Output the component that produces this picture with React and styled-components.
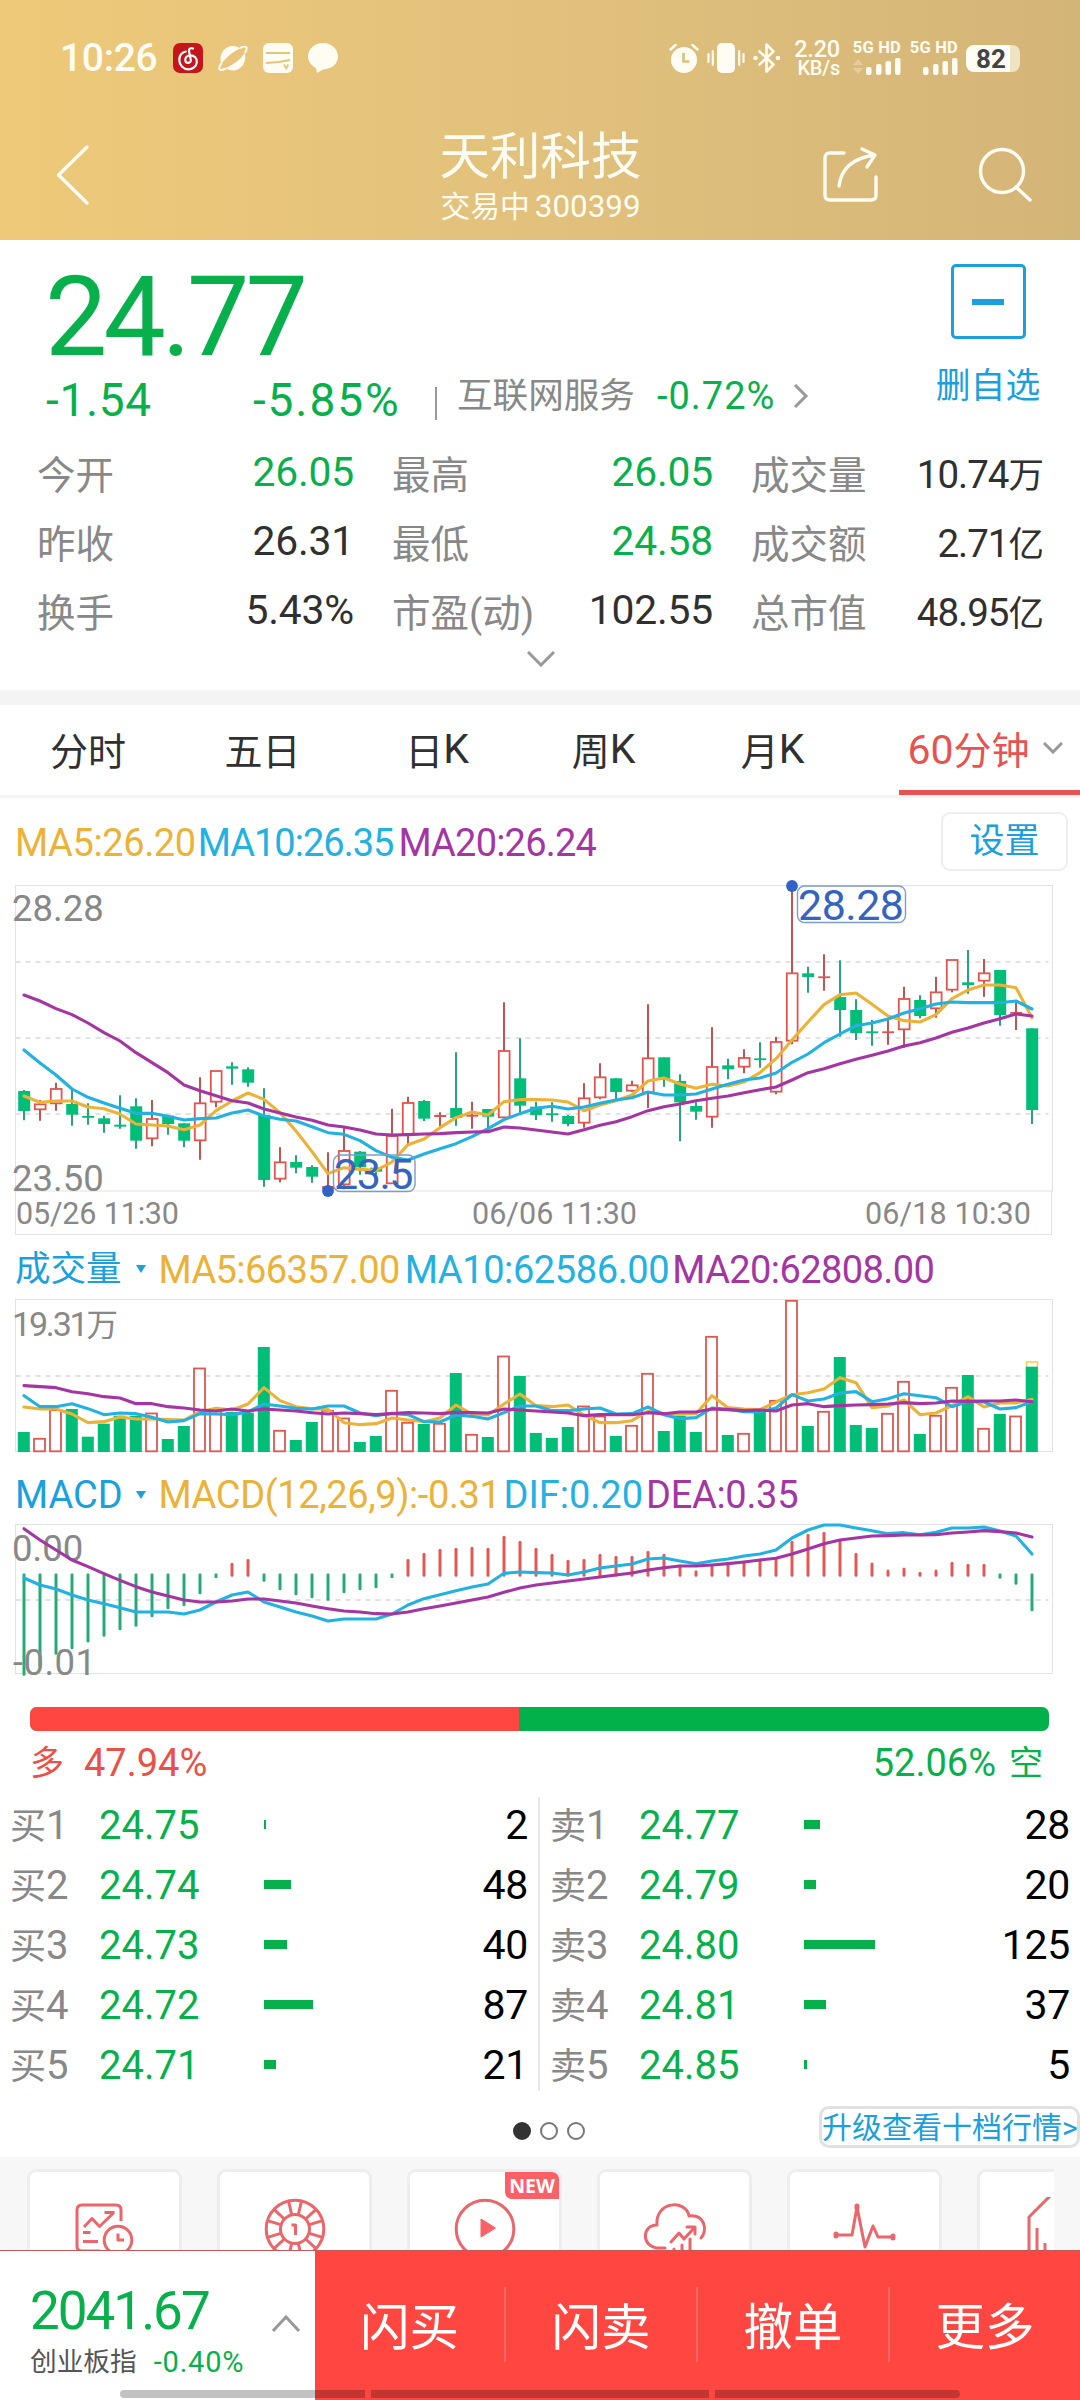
import React from 'react'
import styled, { createGlobalStyle } from 'styled-components'

const c = {
  green: '#07b04b',
  candleGreen: '#00bd78',
  wickGreen: '#2aa27a',
  red: '#ff4640',
  tabRed: '#e65350',
  candleRed: '#e0564f',
  wickRed: '#bd5652',
  blue: '#1b9fdd',
  marker: '#3564bd',
  yellow: '#ecb237',
  cyan: '#22b1e0',
  purple: '#a336a3',
  grey: '#888',
  text: '#303030',
  line: '#e2e2e2',
  pink: '#ea666a',
}

const GlobalStyle = createGlobalStyle`
  body {
    margin: 0;
    background: #fff;
  }
  * {
    box-sizing: border-box;
  }
`

const Page = styled.div`
  display: flex;
  flex-direction: column;
  width: 1080px;
  height: 2400px;
  overflow: hidden;
  color: ${c.text};
  background: #fff;
  font-family: Roboto, 'Noto Sans CJK SC', sans-serif;
  white-space: nowrap;
`

/* ---------- header ---------- */

const Header = styled.header`
  display: flex;
  flex-direction: column;
  flex: none;
  height: 240px;
  color: #fffdf3;
  background: linear-gradient(90deg, #eec979 0%, #e1c17c 50%, #d4b578 100%);
`

const StatusBar = styled.div`
  display: flex;
  align-items: center;
  justify-content: space-between;
  height: 116px;
  padding: 0 60px 0 60px;
`

const StatusGroup = styled.div`
  display: flex;
  align-items: center;
`

const Clock = styled.span`
  width: 113px;
  font-size: 39px;
  font-weight: 500;
  line-height: 44px;
  letter-spacing: -0.3px;
`

const StatusIcon = styled.svg`
  flex: none;
  width: ${p => p.$w || 30}px;
  height: 30px;
  margin-right: ${p => p.$gap || 15}px;
`

const Speed = styled.div`
  width: 47px;
  margin-right: 12px;
  font-size: 23.5px;
  font-weight: 500;
  line-height: 20px;
  text-align: right;
  letter-spacing: -0.2px;

  small {
    display: block;
    font-size: 20px;
    line-height: 19px;
  }
`

const Signal = styled.div`
  display: flex;
  flex-direction: column;
  align-items: flex-end;
  width: 49px;
  margin-right: 8px;
  font-size: 16.5px;
  font-weight: 700;
  line-height: 16px;
  letter-spacing: 0.2px;

  svg {
    width: 48px;
    height: 18px;
    margin-top: 2px;
  }
`

const Battery = styled.div`
  width: 54px;
  height: 27px;
  padding-right: 4px;
  border-radius: 8px;
  color: #444;
  background: linear-gradient(90deg, #fffdf3 0 44px, #efe3c6 44px);
  font-size: 26px;
  font-weight: 700;
  line-height: 28px;
  text-align: center;
`

const NavBar = styled.div`
  display: grid;
  grid-template-columns: 200px 1fr 200px 56px;
  height: 124px;
`

const NavTitle = styled.div`
  display: flex;
  flex-direction: column;
  align-items: center;
  padding-left: 57px;
`

const StockName = styled.h1`
  margin: 10px 0 0;
  font-size: 50.5px;
  font-weight: 400;
  line-height: 61px;
`

const StockCode = styled.div`
  font-size: 31.4px;
  line-height: 40px;

  span {
    margin-right: 5px;
    font-size: 29.8px;
  }
`

const NavIcon = styled.svg`
  width: 60px;
  height: 64px;
  margin: 26px 0 0 ${p => p.$left}px;
  fill: none;
  stroke: #fffdf3;
  stroke-width: 3.4;
  stroke-linecap: round;
  stroke-linejoin: round;
`

/* ---------- quote ---------- */

const Quote = styled.section`
  flex: none;
  height: 450px;
  padding: 16px 36px 0 37px;
`

const QuoteTop = styled.div`
  display: flex;
  justify-content: space-between;
  height: 180px;
`

const Price = styled.div`
  margin-left: 8px;
  color: ${c.green};
  font-size: 111px;
  line-height: 122px;
  letter-spacing: -4px;
`

const ChangeRow = styled.div`
  display: flex;
  align-items: center;
  height: 44px;
  padding-left: 9px;
  color: ${c.grey};
`

const Change = styled.span`
  width: ${p => p.$w}px;
  color: ${c.green};
  font-size: ${p => p.$size || 46}px;
  letter-spacing: ${p => p.$ls || 0}px;
  line-height: 44px;
`

const SectorLink = styled.div`
  display: flex;
  align-items: center;
  margin: 0 0 8px 20px;
  font-size: 35.6px;
  line-height: 44px;

  span:first-child {
    margin-right: 22px;
  }
`

const Divider = styled.i`
  width: 2px;
  height: 33px;
  margin-top: 7px;
  background: #999;
`

const Watch = styled.div`
  display: flex;
  flex-direction: column;
  align-items: center;
  width: 106px;
  margin-right: 3px;
  padding-top: 8px;
  color: ${c.blue};
  font-size: 34.8px;
  line-height: 40px;
`

const WatchBox = styled.div`
  display: flex;
  align-items: center;
  justify-content: center;
  width: 75px;
  height: 75px;
  margin-bottom: 27px;
  border: 3px solid ${c.blue};
  border-radius: 5px;

  &::after {
    content: '';
    width: 32px;
    height: 6px;
    background: ${c.blue};
  }
`

const Stats = styled.div`
  display: grid;
  grid-template-columns: 317px 321px 292px;
  column-gap: 38px;
  grid-auto-rows: 69px;
  padding-top: 1px;
`

const Stat = styled.div`
  display: flex;
  align-items: center;
  justify-content: space-between;
  color: ${c.grey};
  font-size: 38.5px;
`

const StatValue = styled.span`
  padding-top: 1px;
  color: ${p => (p.$down ? c.green : c.text)};
  font-size: ${p => (p.$unit ? 38.5 : 40.8)}px;
  letter-spacing: ${p => (p.$unit ? '-1px' : '-0.2px')};

  small {
    font-size: 35.5px;
  }
`

const Chevron = styled.svg`
  display: block;
  flex: none;
  width: ${p => p.$w}px;
  height: ${p => p.$h}px;
  margin-top: ${p => p.$top || 0}px;
  fill: none;
  stroke: ${p => p.$color || '#999'};
  stroke-width: 3;
`

const Expand = styled.div`
  display: flex;
  justify-content: center;
  padding-top: 7px;
`

const Strip = styled.div`
  flex: none;
  height: 15px;
  background: #f4f4f4;
`

/* ---------- tabs ---------- */

const Tabs = styled.nav`
  display: flex;
  flex: none;
  height: 93px;
  border-bottom: 3px solid #f4f4f4;
`

const Tab = styled.div`
  display: flex;
  align-items: center;
  justify-content: center;
  width: ${p => p.$w}px;
  padding-bottom: 3px;
  font-size: 38px;

  span {
    font-size: 41px;
  }
`

const ActiveTab = styled(Tab)`
  gap: 13px;
  margin-left: auto;
  padding: 0 9px 0 0;
  border-bottom: 5px solid ${c.tabRed};
  color: ${c.tabRed};
`

/* ---------- charts ---------- */

const Legend = styled.div`
  display: flex;
  flex: none;
  align-items: center;
  height: ${p => p.$h}px;
  padding: ${p => p.$pad || '0 12px 0 15px'};
  font-size: 38px;
`

const LegendItem = styled.span`
  margin-right: ${p => p.$gap || 0}px;
  padding-top: ${p => p.$top || 0}px;
  color: ${p => p.$color};
  letter-spacing: ${p => p.$ls || 0}px;
`

const Indicator = styled.div`
  display: flex;
  align-items: center;
  width: 143.5px;
  color: ${c.blue};
  font-size: ${p => p.$size || 35.5}px;
  line-height: 44px;
  margin-bottom: ${p => p.$lift || 0}px;

  &::after {
    content: '';
    margin-left: auto;
    margin-right: 13px;
    border: 5px solid transparent;
    border-top: 8px solid ${c.blue};
    border-bottom: 0;
  }
`

const Settings = styled.button`
  width: 127px;
  height: 59px;
  margin-left: auto;
  padding: 0;
  border: 2px solid #eee;
  border-radius: 9px;
  color: ${c.blue};
  background: #fff;
  font: inherit;
  font-size: 35px;
  line-height: 52px;
`

const Chart = styled.svg`
  display: block;
  flex: none;
  width: 1080px;
  height: ${p => p.$h}px;
  overflow: visible;
  font-family: Roboto, 'Noto Sans CJK SC', sans-serif;
`

/* ---------- order book ---------- */

const Ratio = styled.div`
  display: flex;
  flex: none;
  height: 24px;
  margin: 33px 31px 0 30px;
  border-radius: 7px;
  overflow: hidden;
  background: #03b14b;

  &::before {
    content: '';
    width: 47.94%;
    background: ${c.red};
  }
`

const RatioLabels = styled.div`
  display: flex;
  flex: none;
  justify-content: space-between;
  height: 66px;
  padding: 0 37px 0 30px;
  font-size: 34px;
  line-height: 64px;

  span {
    display: flex;
    gap: 13px;
    color: ${c.green};
  }
  span:first-child {
    gap: 20px;
    color: #ea5048;
  }
  b {
    font-size: 38px;
    font-weight: 400;
    letter-spacing: ${p => p.$ls || 0}px;
  }
`

const Book = styled.section`
  display: grid;
  flex: none;
  grid-template-columns: 540px 540px;
  height: 294px;
`

const BookSide = styled.div`
  height: 294px;
  border-right: ${p => (p.$divider ? '2px solid #e8e8e8' : 'none')};
`

const BookRow = styled.div`
  display: grid;
  grid-template-columns: 89px 165px 120px 1fr;
  align-items: center;
  height: 60px;
  padding: 0 10px 4px 10px;
  color: ${c.grey};
  font-size: 36px;

  div {
    margin-top: -4px;
  }
  b {
    color: ${c.green};
    font-size: 40px;
    font-weight: 400;
  }
  em {
    color: #000;
    font-size: 41px;
    font-style: normal;
    text-align: right;
    letter-spacing: -0.3px;
  }
  span {
    font-size: 40px;
  }
`

const DepthBar = styled.i`
  height: 9px;
  margin-top: -1px;
  background: ${c.green};
`

const Pager = styled.div`
  display: grid;
  flex: none;
  grid-template-columns: 1fr auto 1fr;
  align-items: center;
  height: 66px;
  padding-top: 14px;
`

const Dots = styled.div`
  display: flex;
  gap: 9px;
  padding-left: 18px;
`

const Dot = styled.i`
  width: 18px;
  height: 18px;
  border: 2px solid ${p => (p.$on ? '#333' : '#777')};
  border-radius: 50%;
  background: ${p => (p.$on ? '#333' : '#fff')};
`

const Upgrade = styled.button`
  justify-self: end;
  width: 261px;
  height: 42px;
  margin-bottom: 9px;
  padding: 0;
  border: 3px solid #e1e1e1;
  border-radius: 10px;
  color: ${c.blue};
  background: #fff;
  font: inherit;
  font-size: 30px;
  line-height: 37px;
`

/* ---------- bottom ---------- */

const Tools = styled.div`
  display: flex;
  flex: none;
  gap: 35px;
  height: 93px;
  padding: 12px 0 0 27px;
  border-right: 26px solid #f7f7f7;
  overflow: hidden;
  background: #f7f7f7;
`

const ToolCard = styled.div`
  display: flex;
  flex: none;
  justify-content: center;
  position: relative;
  width: 155px;
  height: 140px;
  padding-top: 25px;
  border: 3px solid #ededed;
  border-radius: 9px;
  background: #fff;

  svg {
    width: 64px;
    height: 64px;
    fill: none;
    stroke: ${c.pink};
    stroke-width: 3;
    stroke-linejoin: round;
  }
`

const NewBadge = styled.div`
  position: absolute;
  top: 0;
  right: 0;
  width: 54px;
  height: 27px;
  border-radius: 0 7px 0 7px;
  color: #fff;
  background: #fb6067;
  font-family: 'Noto Sans', sans-serif;
  font-size: 19.5px;
  font-weight: 700;
  line-height: 28px;
  text-align: center;
`

const Footer = styled.footer`
  display: grid;
  flex: none;
  grid-template-columns: 315px 1fr;
  position: relative;
  height: 150px;
  border-top: 1px solid #c4575a;
`

const IndexBox = styled.div`
  display: flex;
  align-items: center;
  justify-content: space-between;
  padding: 12px 15px 0 30px;
`

const IndexValue = styled.div`
  color: ${c.green};
  font-size: 53px;
  line-height: 60px;
  letter-spacing: -2px;
`

const IndexName = styled.div`
  display: flex;
  gap: 17px;
  color: #555;
  font-size: 26.7px;
  line-height: 42px;

  span {
    color: ${c.green};
    font-size: 29px;
    letter-spacing: 0.8px;
  }
`

const Actions = styled.div`
  display: grid;
  grid-template-columns: 191px 192px 192px 190px;
  align-items: center;
  padding-bottom: 2px;
  background: ${c.red};
`

const Action = styled.div`
  height: 75px;
  border-right: ${p => (p.$last ? 'none' : '2px solid #ff6a62')};
  color: #fff;
  font-size: 49.5px;
  line-height: 82px;
  text-align: center;
`

const HomeBar = styled.div`
  position: absolute;
  left: 120px;
  bottom: 2px;
  width: 840px;
  height: 8px;
  border-radius: 4px;
  background: linear-gradient(
    90deg,
    rgba(0, 0, 0, 0.24) 0 245px,
    transparent 245px 251px,
    rgba(0, 0, 0, 0.24) 251px 589px,
    transparent 589px 595px,
    rgba(0, 0, 0, 0.24) 595px
  );
`

/* ---------- data ---------- */

const STATS = [
  { label: '今开', value: '26.05', down: true },
  { label: '最高', value: '26.05', down: true },
  { label: '成交量', value: '10.74', unit: '万' },
  { label: '昨收', value: '26.31' },
  { label: '最低', value: '24.58', down: true },
  { label: '成交额', value: '2.71', unit: '亿' },
  { label: '换手', value: '5.43%' },
  { label: '市盈(动)', value: '102.55' },
  { label: '总市值', value: '48.95', unit: '亿' },
]

const TABS = [
  ['分时', '', 176],
  ['五日', '', 173],
  ['日', 'K', 176],
  ['周', 'K', 157],
  ['月', 'K', 181],
]

const BUY = [
  ['24.75', 2, 2],
  ['24.74', 48, 27],
  ['24.73', 40, 23],
  ['24.72', 87, 49],
  ['24.71', 21, 12],
]

const SELL = [
  ['24.77', 28, 16],
  ['24.79', 20, 12],
  ['24.80', 125, 71],
  ['24.81', 37, 22],
  ['24.85', 5, 3],
]

// [isUp, high, body top, body bottom, low], three units per pixel
const CANDLES = [
  [0, 660, 663, 723, 751], [1, 690, 703, 718, 752], [1, 638, 657, 700, 722], [0, 660, 702, 734, 767],
  [0, 700, 738, 743, 764], [0, 737, 745, 762, 788], [0, 676, 764, 770, 776], [0, 685, 709, 812, 836],
  [1, 690, 747, 805, 829], [0, 737, 737, 762, 794], [0, 760, 760, 812, 832], [1, 622, 700, 811, 869],
  [1, 603, 603, 695, 712], [0, 577, 589, 596, 644], [0, 592, 598, 638, 650], [0, 655, 735, 930, 950],
  [1, 832, 877, 926, 937], [0, 856, 876, 893, 910], [0, 886, 891, 920, 938], [1, 847, 948, 958, 960],
  [1, 772, 843, 943, 958], [0, 843, 845, 892, 914], [0, 890, 893, 905, 920], [1, 716, 798, 940, 940],
  [1, 680, 699, 793, 822], [0, 690, 693, 746, 753], [1, 727, 735, 741, 768], [0, 547, 714, 744, 767],
  [1, 695, 734, 740, 776], [0, 717, 717, 740, 776], [1, 397, 543, 742, 742], [0, 505, 625, 707, 728],
  [0, 695, 710, 735, 750], [0, 697, 730, 735, 755], [0, 735, 738, 762, 769], [1, 640, 685, 758, 773],
  [1, 580, 622, 682, 688], [0, 625, 625, 666, 690], [1, 632, 646, 662, 665], [1, 403, 565, 668, 714],
  [0, 562, 562, 628, 650], [0, 613, 633, 697, 814], [0, 697, 708, 725, 749], [1, 472, 591, 740, 773],
  [0, 566, 586, 598, 628], [1, 538, 564, 590, 610], [0, 517, 565, 570, 593], [1, 500, 516, 665, 673],
  [1, 48, 310, 512, 523], [0, 290, 310, 321, 368], [1, 253, 319, 322, 362], [0, 271, 381, 420, 500],
  [0, 388, 420, 489, 510], [0, 450, 484, 488, 527], [1, 450, 484, 487, 524], [1, 350, 387, 478, 534],
  [0, 376, 390, 438, 445], [1, 320, 367, 415, 443], [1, 270, 270, 359, 367], [0, 240, 337, 345, 371],
  [1, 267, 310, 332, 380], [0, 300, 300, 435, 467], [1, 397, 426, 431, 480], [0, 475, 475, 720, 762],
]

const PRICE_MA5 = [
  678, 697, 693, 693, 711, 716, 732, 762, 765, 768, 779, 765, 722, 693, 669, 688, 728, 783, 845, 911, 893, 898,
  901, 876, 824, 807, 773, 743, 726, 735, 695, 689, 689, 690, 696, 722, 705, 692, 675, 633, 624, 642, 655, 643,
  648, 636, 608, 566, 510, 456, 404, 374, 369, 403, 438, 452, 456, 434, 386, 360, 345, 345, 353, 443,
]
const PRICE_MA10 = [
  540, 579, 615, 657, 682, 699, 715, 730, 730, 739, 750, 746, 744, 729, 720, 738, 748, 753, 770, 788, 793, 812,
  842, 862, 870, 852, 836, 821, 800, 776, 749, 731, 715, 709, 717, 711, 700, 690, 683, 666, 675, 675, 672, 657,
  643, 630, 624, 609, 577, 552, 518, 492, 467, 459, 447, 429, 416, 402, 396, 398, 398, 398, 393, 417,
]
const PRICE_MA20 = [
  375, 393, 416, 434, 459, 488, 513, 548, 578, 608, 645, 662, 677, 692, 699, 717, 729, 741, 751, 765, 771, 780,
  792, 795, 794, 792, 791, 788, 786, 785, 771, 774, 780, 786, 792, 779, 766, 755, 740, 722, 710, 702, 692, 685,
  678, 668, 659, 651, 630, 608, 596, 581, 568, 556, 543, 528, 518, 504, 487, 474, 459, 446, 432, 438,
]

const VOLUME = [
  576, 594, 508, 507, 590, 551, 527, 527, 518, 597, 558, 383, 505, 516, 518, 321, 570, 600, 546, 510, 533, 606,
  588, 450, 546, 552, 549, 399, 582, 591, 347, 408, 579, 594, 561, 497, 527, 588, 555, 399, 573, 527, 576, 288,
  585, 579, 516, 480, 180, 558, 513, 351, 555, 564, 519, 423, 582, 525, 441, 405, 564, 522, 527, 380,
]
const VOLUME_MA5 = [
  501, 507, 507, 522, 548, 545, 531, 537, 537, 539, 540, 515, 505, 510, 492, 443, 482, 500, 506, 508, 548, 554,
  551, 534, 540, 545, 534, 495, 522, 525, 492, 462, 497, 500, 495, 525, 548, 548, 542, 513, 524, 522, 521, 467,
  503, 507, 509, 486, 464, 458, 447, 413, 428, 503, 498, 480, 524, 519, 497, 470, 501, 489, 489, 478,
]
const VOLUME_MA10 = [
  467, 500, 500, 491, 506, 524, 519, 521, 532, 546, 542, 521, 522, 524, 516, 492, 498, 505, 507, 498, 498, 519,
  527, 520, 524, 545, 546, 525, 529, 537, 518, 498, 498, 512, 512, 507, 504, 522, 521, 501, 524, 536, 533, 504,
  508, 515, 516, 504, 464, 483, 477, 459, 455, 485, 476, 461, 467, 473, 500, 484, 486, 507, 503, 485,
]
const VOLUME_MA20 = [
  437, 440, 443, 455, 461, 470, 474, 491, 491, 500, 504, 510, 513, 507, 513, 507, 510, 513, 518, 522, 519, 521,
  524, 521, 518, 519, 521, 517, 518, 519, 507, 510, 513, 516, 519, 527, 524, 524, 524, 518, 521, 516, 516, 507,
  509, 512, 510, 513, 495, 491, 500, 497, 495, 494, 492, 488, 491, 489, 483, 484, 483, 483, 480, 485,
]

const MACD = [
  643, 617, 580, 563, 543, 526, 506, 496, 467, 443, 434, 398, 350, 313, 301, 361, 386, 401, 410, 418, 395, 386,
  380, 350, 301, 283, 271, 268, 265, 268, 232, 247, 268, 286, 304, 301, 286, 292, 292, 277, 286, 318, 335, 318,
  313, 307, 301, 295, 247, 226, 220, 244, 283, 312, 333, 327, 340, 333, 310, 316, 316, 352, 370, 449,
]
const DIF = [
  354, 375, 387, 405, 420, 431, 443, 456, 456, 456, 462, 450, 426, 405, 396, 426, 441, 456, 468, 483, 477, 477,
  477, 462, 435, 416, 404, 392, 381, 372, 340, 336, 338, 339, 345, 336, 324, 318, 312, 297, 294, 303, 311, 303,
  297, 288, 282, 270, 234, 210, 195, 195, 204, 212, 221, 218, 224, 217, 204, 204, 201, 213, 228, 282,
]
const DEA = [
  206, 240, 270, 300, 320, 341, 361, 380, 396, 408, 420, 426, 426, 423, 417, 417, 423, 429, 438, 446, 453, 456,
  461, 462, 456, 446, 438, 429, 420, 411, 397, 384, 375, 369, 363, 357, 351, 345, 339, 330, 323, 318, 318, 315,
  311, 306, 300, 295, 282, 267, 251, 240, 234, 228, 227, 225, 225, 224, 219, 216, 212, 215, 219, 231,
]

const LEFT = 15.5
const RIGHT = 1052.5

const xAt = i => 24 + i * 16

const Line = ({ data, color, top }) => (
  <polyline
    points={data.map((v, i) => `${xAt(i)},${(v - top) / 3}`).join(' ')}
    fill='none'
    stroke={color}
    strokeWidth='3.1'
    strokeLinejoin='round'
    strokeLinecap='round'
  />
)

const Frame = ({ height, grid }) => (
  <g fill='none' stroke={c.line}>
    <rect x={LEFT} y='0.5' width={RIGHT - LEFT} height={height} />
    {grid.map(y => (
      <line key={y} x1={LEFT} x2={RIGHT - 4} y1={y} y2={y} strokeWidth='2' strokeDasharray='5 5' />
    ))}
  </g>
)

const Marker = ({ x, y, width, boxY, label }) => (
  <g>
    <circle cx={x} cy={y} r='5.9' fill='#2f63c5' />
    <rect
      x={x + 5.5} y={boxY} width={width} height='36.5' rx='7'
      fill='none' stroke='#7d9bcb' strokeWidth='1.4'
    />
    <text x={x + 6} y={boxY + 33.5} fill={c.marker} fontSize='43' textLength={width - 2}>
      {label}
    </text>
  </g>
)

const PriceChart = () => (
  <Chart $h={350}>
    <Frame height={305.5} grid={[77, 153, 229]} />
    <path d={`M${LEFT} 306V349.5H1051.5V306`} fill='none' stroke={c.line} />
    {CANDLES.map(([up, high, top, bottom, low], i) => {
      const y = v => (v - 45) / 3
      const x = xAt(i)
      const flat = bottom - top < 12
      return (
        <g key={i}>
          <line x1={x} x2={x} y1={y(high)} y2={y(low)} stroke={up ? c.wickRed : c.wickGreen} strokeWidth='2' />
          {up && !flat ? (
            <rect
              x={x - 5.2} y={y(top)} width='10.8' height={y(bottom) - y(top)}
              fill='#fff' stroke={c.candleRed} strokeWidth='1.8'
            />
          ) : (
            <rect
              x={x - 5.8} y={y(top)} width='12' height={Math.max(1.8, y(bottom) - y(top))}
              fill={up ? c.candleRed : c.candleGreen}
            />
          )}
        </g>
      )
    })}
    <Line data={PRICE_MA5} color={c.yellow} top={45} />
    <Line data={PRICE_MA10} color={c.cyan} top={45} />
    <Line data={PRICE_MA20} color={c.purple} top={45} />
    <g fill={c.grey} fontSize='36.5'>
      <text x='12' y='35.5'>28.28</text>
      <text x='12' y='305.5'>23.50</text>
    </g>
    <g fill={c.grey} fontSize='30.5'>
      <text x='16' y='338.5' textLength='163'>05/26 11:30</text>
      <text x='472' y='338.5' textLength='165'>06/06 11:30</text>
      <text x='865' y='338.5' textLength='166'>06/18 10:30</text>
    </g>
    <Marker x={792} y={1} boxY={1} width={108} label='28.28' />
    <Marker x={328} y={306} boxY={270} width={81.5} label='23.5' />
  </Chart>
)

const VolumeChart = () => (
  <Chart $h={153}>
    <Frame height={152} grid={[77]} />
    <rect x={xAt(63) - 5.5} y={63} width='11' height='30' fill='#fff' stroke='#f0cf60' strokeWidth='1.6' />
    {VOLUME.map((v, i) => {
      const y = (v - 177) / 3
      const x = xAt(i)
      return CANDLES[i][0] ? (
        <rect
          key={i} x={x - 6} y={y + 0.8} width='11' height={151.5 - y}
          fill='#fff' stroke={c.candleRed} strokeWidth='1.8'
        />
      ) : (
        <rect key={i} x={x - 6.2} y={y} width='12' height={153 - y} fill={c.candleGreen} />
      )
    })}
    <Line data={VOLUME_MA5} color={c.yellow} top={177} />
    <Line data={VOLUME_MA10} color={c.cyan} top={177} />
    <Line data={VOLUME_MA20} color={c.purple} top={177} />
    <text x='12' y='37' fill={c.grey} fontSize='34' textLength='106'>
      19.31<tspan fontSize='31.5'>万</tspan>
    </text>
  </Chart>
)

const MacdChart = () => (
  <Chart $h={150}>
    <Frame height={149} grid={[76]} />
    {MACD.map((v, i) => {
      const up = v < 345
      return (
        <line
          key={i} x1={xAt(i)} x2={xAt(i)}
          y1={((up ? 346 : 344) - 192) / 3} y2={(v - 192) / 3}
          stroke={up ? '#dd5a55' : '#27aa78'} strokeWidth='3' strokeLinecap='round'
        />
      )
    })}
    <g fill={c.grey} fontSize='36.5'>
      <text x='12' y='36.5'>0.00</text>
      <text x='13' y='151' textLength='83'>-0.01</text>
    </g>
    <Line data={DIF} color={c.cyan} top={192} />
    <Line data={DEA} color={c.purple} top={192} />
  </Chart>
)

/* ---------- status icons ---------- */

const Bars = ({ arrows }) => (
  <svg viewBox='0 0 48 18' fill='#fffdf3'>
    {arrows && <path d='M0 7l5-6 5 6zM0 10l5 6 5-6z' opacity='0.3' />}
    <rect x='13' y='9' width='5.5' height='8' rx='2' />
    <rect x='23' y='6' width='5.5' height='11' rx='2' />
    <rect x='32.500' y='3' width='5.5' height='14' rx='2' />
    <rect x='42' y='0' width='5.5' height='17' rx='2' />
  </svg>
)

const Status = () => (
  <StatusBar>
    <StatusGroup>
      <Clock>10:26</Clock>
      <StatusIcon viewBox='0 0 30 30'>
        <rect width='30' height='30' rx='7' fill='#c4151b' />
        <path
          d='M20 5.500c-2-1-4.500 0-4 2.500l1.800 9c.5 3.500-5 4-5.500.3-.4-3 2-5 5-5 4 0 7 3 6.500 7-.5 4-4 7-8.500 7s-9-4-9-9 3-8 6.500-8.800'
          fill='none' stroke='#fff' strokeWidth='2.200' strokeLinecap='round'
        />
      </StatusIcon>
      <StatusIcon viewBox='0 0 30 30' fill='#fffdf3'>
        <path d='M3.500 21C0 11 7 3 15 3c3 0 5.500 1 7.500 2.500C16 8 8 14 3.500 21z' />
        <path d='M26.800 10c2.500 9-3.800 17.500-11.800 17.500-3 0-5.500-1-7.500-2.500C14 22.500 22 17 26.800 10z' />
        <path
          d='M3.500 20C-.5 26 1 29 8 25.500M22 5c7-3 8-1 5 5'
          fill='none' stroke='#fffdf3' strokeWidth='2'
        />
      </StatusIcon>
      <StatusIcon viewBox='0 0 30 30'>
        <rect width='30' height='30' rx='6' fill='#fffdf3' />
        <path d='M3 10h24M3 20l13-1 11-2' fill='none' stroke='#e6c47b' strokeWidth='2.200' />
        <path d='M21 21.500l2.200 4 2.200-4' fill='none' stroke='#e6c47b' strokeWidth='1.600' />
      </StatusIcon>
      <StatusIcon viewBox='0 0 30 30' fill='#fffdf3'>
        <path d='M15 0c8.500 0 15 6 15 13.500S23.500 26 15 26.500L9 30l-1-5C3 22.500 0 18.500 0 13.500 0 6 6.500 0 15 0z' />
      </StatusIcon>
    </StatusGroup>
    <StatusGroup>
      <StatusIcon viewBox='0 0 30 30' $gap={8}>
        <circle cx='15' cy='17' r='13' fill='#fffdf3' />
        <path d='M1.500 6.500l5-4.500M28.500 6.500l-5-4.500' stroke='#fffdf3' strokeWidth='2.500' strokeLinecap='round' />
        <path d='M14.500 10v8.500h6' fill='none' stroke='#dcbf80' strokeWidth='2.600' />
      </StatusIcon>
      <StatusIcon viewBox='0 0 38 30' $w={38} $gap={8}>
        <rect x='10' y='0' width='18' height='30' rx='5' fill='#fffdf3' />
        <path d='M1.500 11v8M5.800 8v14M32.200 8v14M36.500 11v8' stroke='#fffdf3' strokeWidth='2.200' strokeLinecap='round' />
      </StatusIcon>
      <StatusIcon viewBox='0 0 28 30' $w={28} $gap={12}>
        <path
          d='M6.500 8.500l14 13-7 7v-27l7 7-14 13'
          fill='none' stroke='#fffdf3' strokeWidth='2.600' strokeLinejoin='round' strokeLinecap='round'
        />
        <circle cx='2.500' cy='15' r='2.300' fill='#fffdf3' />
        <circle cx='25' cy='15' r='2.300' fill='#fffdf3' />
      </StatusIcon>
      <Speed>
        2.20
        <small>KB/s</small>
      </Speed>
      <Signal>
        5G HD
        <Bars arrows />
      </Signal>
      <Signal>
        5G HD
        <Bars />
      </Signal>
      <Battery>82</Battery>
    </StatusGroup>
  </StatusBar>
)

/* ---------- shortcut icons ---------- */

// pairs of spokes every 60 degrees
const spokes = [0, 60, 120, 180, 240, 300]
  .flatMap(deg => [deg - 13, deg + 13])
  .map(deg => {
    const sin = Math.sin((deg * Math.PI) / 180)
    const cos = Math.cos((deg * Math.PI) / 180)
    return `M${32 + 15 * sin} ${32 - 15 * cos}L${32 + 28 * sin} ${32 - 28 * cos}`
  })
  .join('')

const TOOLS = [
  <svg key='report' viewBox='0 0 64 64'>
    <path d='M27 54H9q-5 0-5-5V13q0-5 5-5h34q5 0 5 5v11' />
    <path d='M11 30l8-8.500 7.500 8L41 15.500M31.500 15.500h10M10 35.500h7.500M10 44.500h15' />
    <circle cx='45' cy='43' r='13.800' />
    <path d='M45 36.500V43h6' />
  </svg>,
  <svg key='chip' viewBox='0 0 64 64'>
    <circle cx='32' cy='32' r='28.800' />
    <circle cx='32' cy='32' r='14.500' />
    <path d={spokes} />
    <path d='M28.500 28h4v10' />
  </svg>,
  <svg key='play' viewBox='0 0 64 64'>
    <circle cx='32' cy='32' r='28.800' />
    <path d='M28 22l14.500 9L28 40z' fill='#fb6067' stroke='#fb6067' strokeWidth='1' />
  </svg>,
  <svg key='cloud' viewBox='0 0 64 64' strokeLinecap='round'>
    <path d='M22 51H14C-2 49-1 28 14 28 12 4 43 2 46 19c16-2 19 15 12 22' />
    <path d='M28 45l8-9 5 6 11-12M44 30h8v7M31 58v-6M39 58V48M47 58V42' />
  </svg>,
  <svg key='pulse' viewBox='0 0 64 64'>
    <path d='M3 38h16l5-28 8 40 8-21 5 11h15' />
    <path d='M3 37v2M24 9v2M60 39v2' strokeWidth='5' strokeLinecap='round' />
  </svg>,
  <svg key='house' viewBox='0 0 64 64'>
    <path d='M6 60V20L32-6M14 60V31M22 60V46' />
  </svg>,
]

const Side = ({ name, rows, divider }) => (
  <BookSide $divider={divider}>
    {rows.map(([price, amount, width], i) => (
      <BookRow key={price}>
        <div>
          {name}
          <span>{i + 1}</span>
        </div>
        <b>{price}</b>
        <DepthBar style={{ width }} />
        <em>{amount}</em>
      </BookRow>
    ))}
  </BookSide>
)

const App = () => (
  <Page>
    <GlobalStyle />
    <Header>
      <Status />
      <NavBar>
        <NavIcon viewBox='0 0 60 64' $left={52}>
          <path d='M35 5L6.500 33 35 61' />
        </NavIcon>
        <NavTitle>
          <StockName>天利科技</StockName>
          <StockCode>
            <span>交易中</span>300399
          </StockCode>
        </NavTitle>
        <NavIcon viewBox='0 0 60 64' $left={-4}>
          <path d='M24 11H10q-5 0-5 5v37q0 5 5 5h41q5 0 5-5V35' />
          <path d='M19 44Q22 18 54 13M42 7l13 6-8 12' />
        </NavIcon>
        <NavIcon viewBox='0 0 60 64' $left={-48}>
          <circle cx='26' cy='29' r='21.500' />
          <path d='M40 45l14 13' />
        </NavIcon>
      </NavBar>
    </Header>

    <Quote>
      <QuoteTop>
        <div>
          <Price>24.77</Price>
          <ChangeRow>
            <Change $w={207} $ls={0.7}>-1.54</Change>
            <Change $w={182} $ls={1.9}>-5.85%</Change>
            <Divider />
            <SectorLink>
              <span>互联网服务</span>
              <Change $w={136} $size={38} $ls={1}>-0.72%</Change>
              <Chevron viewBox='0 0 16 24' $w={16} $h={24}>
                <path d='M2 1l11 11L2 23' />
              </Chevron>
            </SectorLink>
          </ChangeRow>
        </div>
        <Watch>
          <WatchBox />
          删自选
        </Watch>
      </QuoteTop>
      <Stats>
        {STATS.map(({ label, value, unit, down }) => (
          <Stat key={label}>
            {label}
            <StatValue $down={down} $unit={unit}>
              {value}
              {unit && <small>{unit}</small>}
            </StatValue>
          </Stat>
        ))}
      </Stats>
      <Expand>
        <Chevron viewBox='0 0 28 16' $w={28} $h={16}>
          <path d='M1 1l13 13L27 1' />
        </Chevron>
      </Expand>
    </Quote>
    <Strip />

    <Tabs>
      {TABS.map(([label, latin, w]) => (
        <Tab key={label} $w={w}>
          {label}
          <span>{latin}</span>
        </Tab>
      ))}
      <ActiveTab $w={181}>
        <div>
          <span>60</span>分钟
        </div>
        <Chevron viewBox='0 0 20 12' $w={20} $h={12}>
          <path d='M1 1l9 9 9-9' />
        </Chevron>
      </ActiveTab>
    </Tabs>

    <Legend $h={87}>
      <LegendItem $top={3} $color={c.yellow} $gap={2} $ls={-0.4}>MA5:26.20</LegendItem>
      <LegendItem $top={3} $color={c.cyan} $gap={5} $ls={-1}>MA10:26.35</LegendItem>
      <LegendItem $top={3} $color={c.purple} $ls={-0.8}>MA20:26.24</LegendItem>
      <Settings>设置</Settings>
    </Legend>
    <PriceChart />
    <Legend $h={64} $pad='6px 12px 0 15px'>
      <Indicator $lift={2}>成交量</Indicator>
      <LegendItem $color={c.yellow} $gap={5} $ls={-0.6}>MA5:66357.00</LegendItem>
      <LegendItem $color={c.cyan} $gap={3} $ls={-0.4}>MA10:62586.00</LegendItem>
      <LegendItem $color={c.purple} $ls={-0.6}>MA20:62808.00</LegendItem>
    </Legend>
    <VolumeChart />
    <Legend $h={72} $pad='14px 12px 0 15px'>
      <Indicator $size={38}>MACD</Indicator>
      <LegendItem $color={c.yellow} $gap={3} $ls={-0.4}>MACD(12,26,9):-0.31</LegendItem>
      <LegendItem $color={c.cyan} $gap={3}>DIF:0.20</LegendItem>
      <LegendItem $color={c.purple} $ls={-0.3}>DEA:0.35</LegendItem>
    </Legend>
    <MacdChart />

    <Ratio />
    <RatioLabels>
      <span>多<b>47.94%</b></span>
      <span><b>52.06%</b>空</span>
    </RatioLabels>
    <Book>
      <Side name='买' rows={BUY} divider />
      <Side name='卖' rows={SELL} />
    </Book>
    <Pager>
      <span />
      <Dots>
        <Dot $on />
        <Dot />
        <Dot />
      </Dots>
      <Upgrade>升级查看十档行情&gt;</Upgrade>
    </Pager>

    <Tools>
      {TOOLS.map(icon => (
        <ToolCard key={icon.key}>
          {icon}
          {icon.key === 'play' && <NewBadge>NEW</NewBadge>}
        </ToolCard>
      ))}
    </Tools>

    <Footer>
      <IndexBox>
        <div>
          <IndexValue>2041.67</IndexValue>
          <IndexName>
            创业板指<span>-0.40%</span>
          </IndexName>
        </div>
        <Chevron viewBox='0 0 28 18' $w={28} $h={18} $top={-16}>
          <path d='M1 16L14 2l13 14' />
        </Chevron>
      </IndexBox>
      <Actions>
        <Action>闪买</Action>
        <Action>闪卖</Action>
        <Action>撤单</Action>
        <Action $last>更多</Action>
      </Actions>
      <HomeBar />
    </Footer>
  </Page>
)

export default App
